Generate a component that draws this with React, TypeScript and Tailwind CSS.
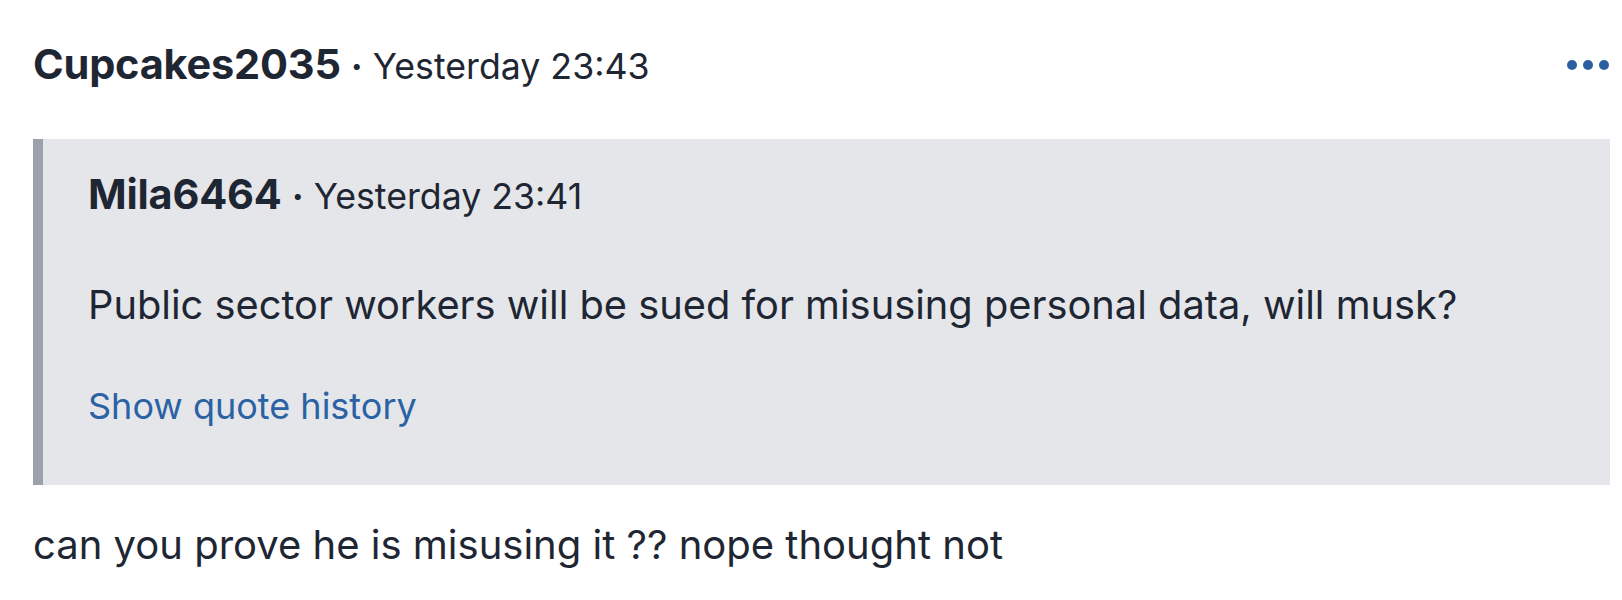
export default function App() {
  return (
    <div className="min-h-screen bg-white font-['Inter',sans-serif] text-[#1f2633]">
      <div className="pl-[33px] pr-[12px] pt-[44px]">
        {/* Post header */}
        <div className="flex items-center justify-between">
          <div className="flex items-baseline leading-none">
            <span className="text-[41.5px] font-bold tracking-[-0.2px]">Cupcakes2035</span>
            <span className="mx-[10px] text-[36px] font-bold">·</span>
            <span className="text-[35.7px]">Yesterday 23:43</span>
          </div>
          <div className="flex items-center gap-[6px] pr-[1px]">
            <span className="h-[10px] w-[10px] rounded-full bg-[#2b5fa0]"></span>
            <span className="h-[10px] w-[10px] rounded-full bg-[#2b5fa0]"></span>
            <span className="h-[10px] w-[10px] rounded-full bg-[#2b5fa0]"></span>
          </div>
        </div>

        {/* Quoted post */}
        <blockquote className="mt-[53px] border-l-[10px] border-[#9ca1ad] bg-[#e5e6ea] pl-[45px] pr-6 pt-[35px] pb-[61px]">
          <div className="flex items-baseline leading-none">
            <span className="text-[41.5px] font-bold tracking-[-0.2px]">Mila6464</span>
            <span className="mx-[10px] text-[36px] font-bold">·</span>
            <span className="text-[35.7px]">Yesterday 23:41</span>
          </div>
          <p className="mt-[70px] text-[39.8px] leading-none">
            Public sector workers will be sued for misusing personal data, will musk?
          </p>
          <a href="#" className="mt-[63px] block text-[36px] leading-none text-[#2a62a3]">
            Show quote history
          </a>
        </blockquote>

        {/* Reply body */}
        <p className="mt-[40px] text-[40px] leading-none">can you prove he is misusing it ?? nope thought not</p>
      </div>
    </div>
  );
}
